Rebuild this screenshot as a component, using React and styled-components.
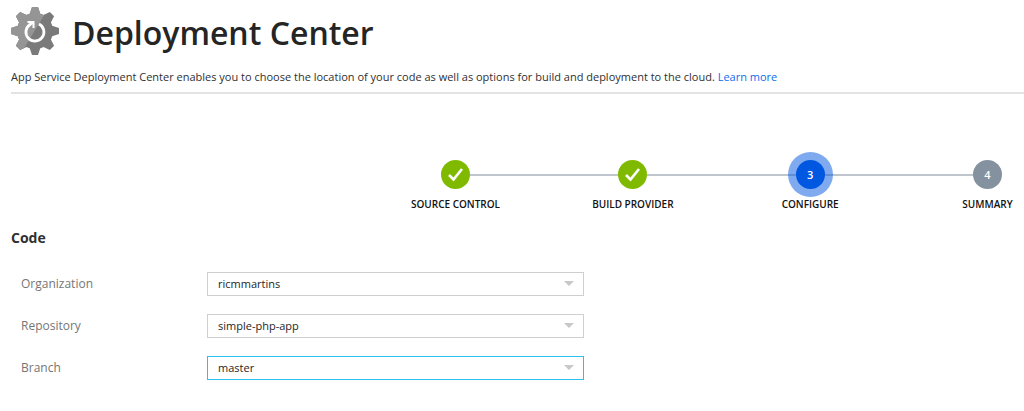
import React from 'react';
import styled, { createGlobalStyle, css } from 'styled-components';

const GlobalStyle = createGlobalStyle`
  *, *::before, *::after { box-sizing: border-box; }
  body {
    margin: 0;
    background: #fff;
    color: #303030;
    font-family: "Open Sans", "Noto Sans", sans-serif;
    font-size: 11px;
    line-height: 16px;
  }
`;

const Page = styled.main`
  padding-left: 11px;
`;

const Header = styled.header`
  padding-top: 5px;
  border-bottom: 2px solid #e3e3e3;
`;

const TitleRow = styled.div`
  display: flex;
  align-items: center;
  gap: 13px;
`;

const GearIcon = styled.svg`
  width: 48px;
  height: 48px;
  margin-bottom: 4px;
  flex: none;
`;

const Title = styled.h1`
  margin: 0;
  color: #252525;
  font-size: 32px;
  line-height: 56px;
  font-weight: 600;
`;

const Intro = styled.p`
  margin: 0;
  padding: 8px 0 7px;
`;

const Link = styled.a`
  color: #0f6cee;
  text-decoration: none;
`;

const Steps = styled.ol`
  display: flex;
  width: 577px;
  max-width: 100%;
  margin: 58px 14px 0 auto;
  padding: 0;
  list-style: none;
`;

const Step = styled.li`
  display: flex;
  flex: none;
  flex-direction: column;
  align-items: center;
  width: 45px;
`;

const Connector = styled.li`
  flex: 1;
  height: 2px;
  margin: 22px -8px 0;
  background: #bfc5cd;
`;

const tones = {
  done: css`background: #7fba00;`,
  current: css`
    background: #0058e0;
    box-shadow: 0 0 0 8px rgba(0, 85, 223, 0.5);
  `,
  pending: css`background: #84919f;`,
};

const Marker = styled.span`
  position: relative;
  z-index: 1;
  display: flex;
  align-items: center;
  justify-content: center;
  width: 29px;
  height: 29px;
  margin: 8px 0 7px;
  border-radius: 50%;
  color: #fff;
  font-weight: 600;
  ${({ $state }) => tones[$state]}
`;

const StepLabel = styled.span`
  color: #111;
  font-size: 10px;
  font-weight: 600;
  white-space: nowrap;
`;

const SectionTitle = styled.h2`
  margin: 0;
  padding-top: 16px;
  font-size: 14px;
  line-height: 20px;
  font-weight: 700;
`;

const Form = styled.form`
  display: flex;
  flex-direction: column;
  gap: 18px;
  padding: 24px 10px 30px;
`;

const Field = styled.div`
  display: grid;
  grid-template-columns: 186px minmax(0, 377px);
  align-items: center;
`;

const FieldLabel = styled.label`
  color: #767676;
  font-size: 12px;
`;

const SelectBox = styled.div`
  display: grid;
  align-items: center;
`;

const Select = styled.select`
  grid-area: 1 / 1;
  width: 100%;
  height: 24px;
  padding: 0 32px 0 10px;
  border: 1px solid ${({ $active }) => ($active ? '#2bbfec' : '#cfcfcf')};
  border-radius: 0;
  outline: none;
  appearance: none;
  background: #fff;
  color: #252525;
  font: inherit;
`;

const Arrow = styled.svg`
  grid-area: 1 / 1;
  justify-self: end;
  width: 10px;
  height: 5px;
  margin: 0 10px 2px 0;
  pointer-events: none;
`;

function Gear() {
  return (
    <GearIcon viewBox="0 0 48 48" aria-hidden="true">
      <defs>
        <clipPath id="gear">
          <circle cx="24" cy="24" r="18" />
          {[0, 45, 90, 135, 180, 225, 270, 315].map((angle) => (
            <path key={angle} d="M18 9 L21 0 H27 L30 9 Z" transform={`rotate(${angle} 24 24)`} />
          ))}
        </clipPath>
      </defs>
      <g clipPath="url(#gear)">
        <rect width="48" height="48" fill="#7a7a7a" />
        <path d="M0 0H38L9 48H0Z" fill="#959595" />
      </g>
      <path d="M28 17A9 9 0 1 1 19 17.500L21.500 15.500" fill="none" stroke="#fff" strokeWidth="2.800" />
      <path d="M16.500 15H22.500V21" fill="none" stroke="#fff" strokeWidth="2" />
    </GearIcon>
  );
}

function Check() {
  return (
    <svg width="17" height="15" viewBox="0 0 17 15" aria-hidden="true">
      <path d="M2 8L6.500 12.500L15 2" fill="none" stroke="#fff" strokeWidth="2.600" />
    </svg>
  );
}

const steps = [
  { label: 'SOURCE CONTROL', state: 'done' },
  { label: 'BUILD PROVIDER', state: 'done' },
  { label: 'CONFIGURE', state: 'current' },
  { label: 'SUMMARY', state: 'pending' },
];

const fields = [
  { id: 'organization', label: 'Organization', value: 'ricmmartins' },
  { id: 'repository', label: 'Repository', value: 'simple-php-app' },
  { id: 'branch', label: 'Branch', value: 'master', active: true },
];

export default function App() {
  return (
    <>
      <GlobalStyle />
      <Page>
        <Header>
          <TitleRow>
            <Gear />
            <Title>Deployment Center</Title>
          </TitleRow>
          <Intro>
            App Service Deployment Center enables you to choose the location of your code as well as
            options for build and deployment to the cloud. <Link href="#learn">Learn more</Link>
          </Intro>
        </Header>
        <Steps>
          {steps.map(({ label, state }, index) => (
            <React.Fragment key={label}>
              {index > 0 && <Connector aria-hidden="true" />}
              <Step aria-current={state === 'current' ? 'step' : undefined}>
                <Marker $state={state}>{state === 'done' ? <Check /> : index + 1}</Marker>
                <StepLabel>{label}</StepLabel>
              </Step>
            </React.Fragment>
          ))}
        </Steps>
        <SectionTitle>Code</SectionTitle>
        <Form>
          {fields.map(({ id, label, value, active }) => (
            <Field key={id}>
              <FieldLabel htmlFor={id}>{label}</FieldLabel>
              <SelectBox>
                <Select id={id} defaultValue={value} $active={active}>
                  <option>{value}</option>
                </Select>
                <Arrow viewBox="0 0 10 5" aria-hidden="true">
                  <path d="M0 0H10L5 5Z" fill="#c8c8c8" />
                </Arrow>
              </SelectBox>
            </Field>
          ))}
        </Form>
      </Page>
    </>
  );
}
